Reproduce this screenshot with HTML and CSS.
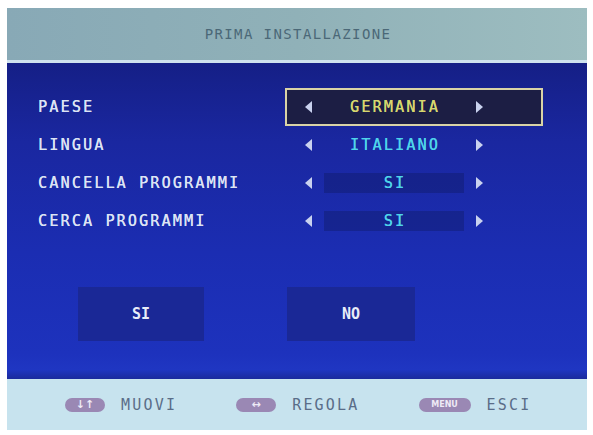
FILE: index.html
```html
<!DOCTYPE html>
<html>
<head>
<meta charset="utf-8">
<link rel="stylesheet" href="styles.css">
</head>
<body>
<div class="screen">
  <div class="header"><span class="title">PRIMA INSTALLAZIONE</span></div>
  <div class="sep"></div>
  <div class="main">
    <div class="rows">
      <div class="row">
        <div class="label">PAESE</div>
        <div class="value selected">
          <span class="arrow left"></span>
          <span class="val yellow">GERMANIA</span>
          <span class="arrow right"></span>
        </div>
      </div>
      <div class="row">
        <div class="label">LINGUA</div>
        <div class="value">
          <span class="arrow left"></span>
          <span class="val cyan">ITALIANO</span>
          <span class="arrow right"></span>
        </div>
      </div>
      <div class="row">
        <div class="label">CANCELLA PROGRAMMI</div>
        <div class="value">
          <span class="arrow left"></span>
          <span class="val cyan bar">SI</span>
          <span class="arrow right"></span>
        </div>
      </div>
      <div class="row">
        <div class="label">CERCA PROGRAMMI</div>
        <div class="value">
          <span class="arrow left"></span>
          <span class="val cyan bar">SI</span>
          <span class="arrow right"></span>
        </div>
      </div>
    </div>
    <div class="buttons">
      <div class="btn btn-si">SI</div>
      <div class="btn btn-no">NO</div>
    </div>
  </div>
  <div class="footer">
    <div class="hint"><span class="pill">&#8595;&#8593;</span><span class="htext">MUOVI</span></div>
    <div class="hint"><span class="pill">&#8596;</span><span class="htext">REGOLA</span></div>
    <div class="hint"><span class="pill pill-menu">MENU</span><span class="htext">ESCI</span></div>
  </div>
</div>
</body>
</html>
```

FILE: styles.css
```css
html, body {
  margin: 0;
  padding: 0;
  background: #ffffff;
}
body {
  width: 593px;
  height: 435px;
  overflow: hidden;
  font-family: "DejaVu Sans Mono", "Liberation Mono", monospace;
}
.screen {
  margin: 8px 0 0 7px;
  width: 580px;
  display: flex;
  flex-direction: column;
}
.header {
  height: 52px;
  background: linear-gradient(90deg, #88a9b6 0%, #90b1b8 50%, #9dbdc0 100%);
  display: flex;
  align-items: center;
  justify-content: center;
}
.title {
  font-size: 14px;
  letter-spacing: 1.4px;
  color: #4b6877;
  padding-left: 2px;
}
.sep {
  height: 3px;
  background: #cfe2ee;
}
.main {
  height: 316px;
  background: linear-gradient(180deg, #151f86 0%, #1a27a0 25%, #1b2db2 60%, #1d32bd 92%, #1f36c2 97%, #1a2a9c 100%);
  padding: 25px 0 0 31px;
  box-sizing: border-box;
  display: flex;
  flex-direction: column;
}
.rows {
  display: flex;
  flex-direction: column;
}
.row {
  height: 38px;
  display: flex;
  align-items: center;
}
.label {
  width: 247px;
  font-size: 15px;
  letter-spacing: 2.2px;
  color: #dde3f4;
  text-shadow: 0.25px 0 0 #dde3f4;
}
.value {
  width: 258px;
  height: 38px;
  box-sizing: border-box;
  display: flex;
  align-items: center;
  padding-left: 18px;
  border: 2px solid transparent;
}
.value.selected {
  border-color: #d9d3a6;
  background: #1c1e44;
}
.arrow {
  width: 0;
  height: 0;
  border-top: 6px solid transparent;
  border-bottom: 6px solid transparent;
}
.arrow.left {
  border-right: 7px solid #c9d2ef;
}
.arrow.right {
  border-left: 7px solid #c9d2ef;
}
.val {
  width: 164px;
  text-align: center;
  font-size: 15px;
  letter-spacing: 2.2px;
  padding-left: 2px;
  box-sizing: border-box;
}
.yellow { color: #d6d76e; text-shadow: 0.3px 0 0 #d6d76e; }
.cyan { color: #4fd4ea; text-shadow: 0.3px 0 0 #4fd4ea; }
.val.bar {
  width: 140px;
  margin: 0 12px 0 12px;
  height: 20px;
  line-height: 20px;
  background: rgba(14, 22, 90, 0.35);
}
.buttons {
  display: flex;
  margin-top: 47px;
  padding-left: 40px;
  gap: 83px;
}
.btn {
  height: 54px;
  display: flex;
  align-items: center;
  justify-content: center;
  background: #1a2896;
  color: #e8ecf8;
  font-size: 15px;
  font-weight: bold;
}
.btn-si { width: 126px; }
.btn-no { width: 128px; }
.footer {
  height: 51px;
  background: #c7e3ee;
  display: flex;
  align-items: center;
  padding-left: 58px;
  gap: 59px;
}
.hint {
  display: flex;
  align-items: center;
  gap: 16px;
}
.pill {
  width: 40px;
  height: 14px;
  border-radius: 7px;
  background: #9a88b4;
  color: #eeeaf6;
  font-family: "DejaVu Sans", sans-serif;
  font-size: 11px;
  font-weight: bold;
  line-height: 14px;
  text-align: center;
}
.pill-menu {
  width: 52px;
  font-size: 8px;
  letter-spacing: 0;
}
.htext {
  font-size: 15px;
  letter-spacing: 2.2px;
  color: #5a6d88;
}
```
